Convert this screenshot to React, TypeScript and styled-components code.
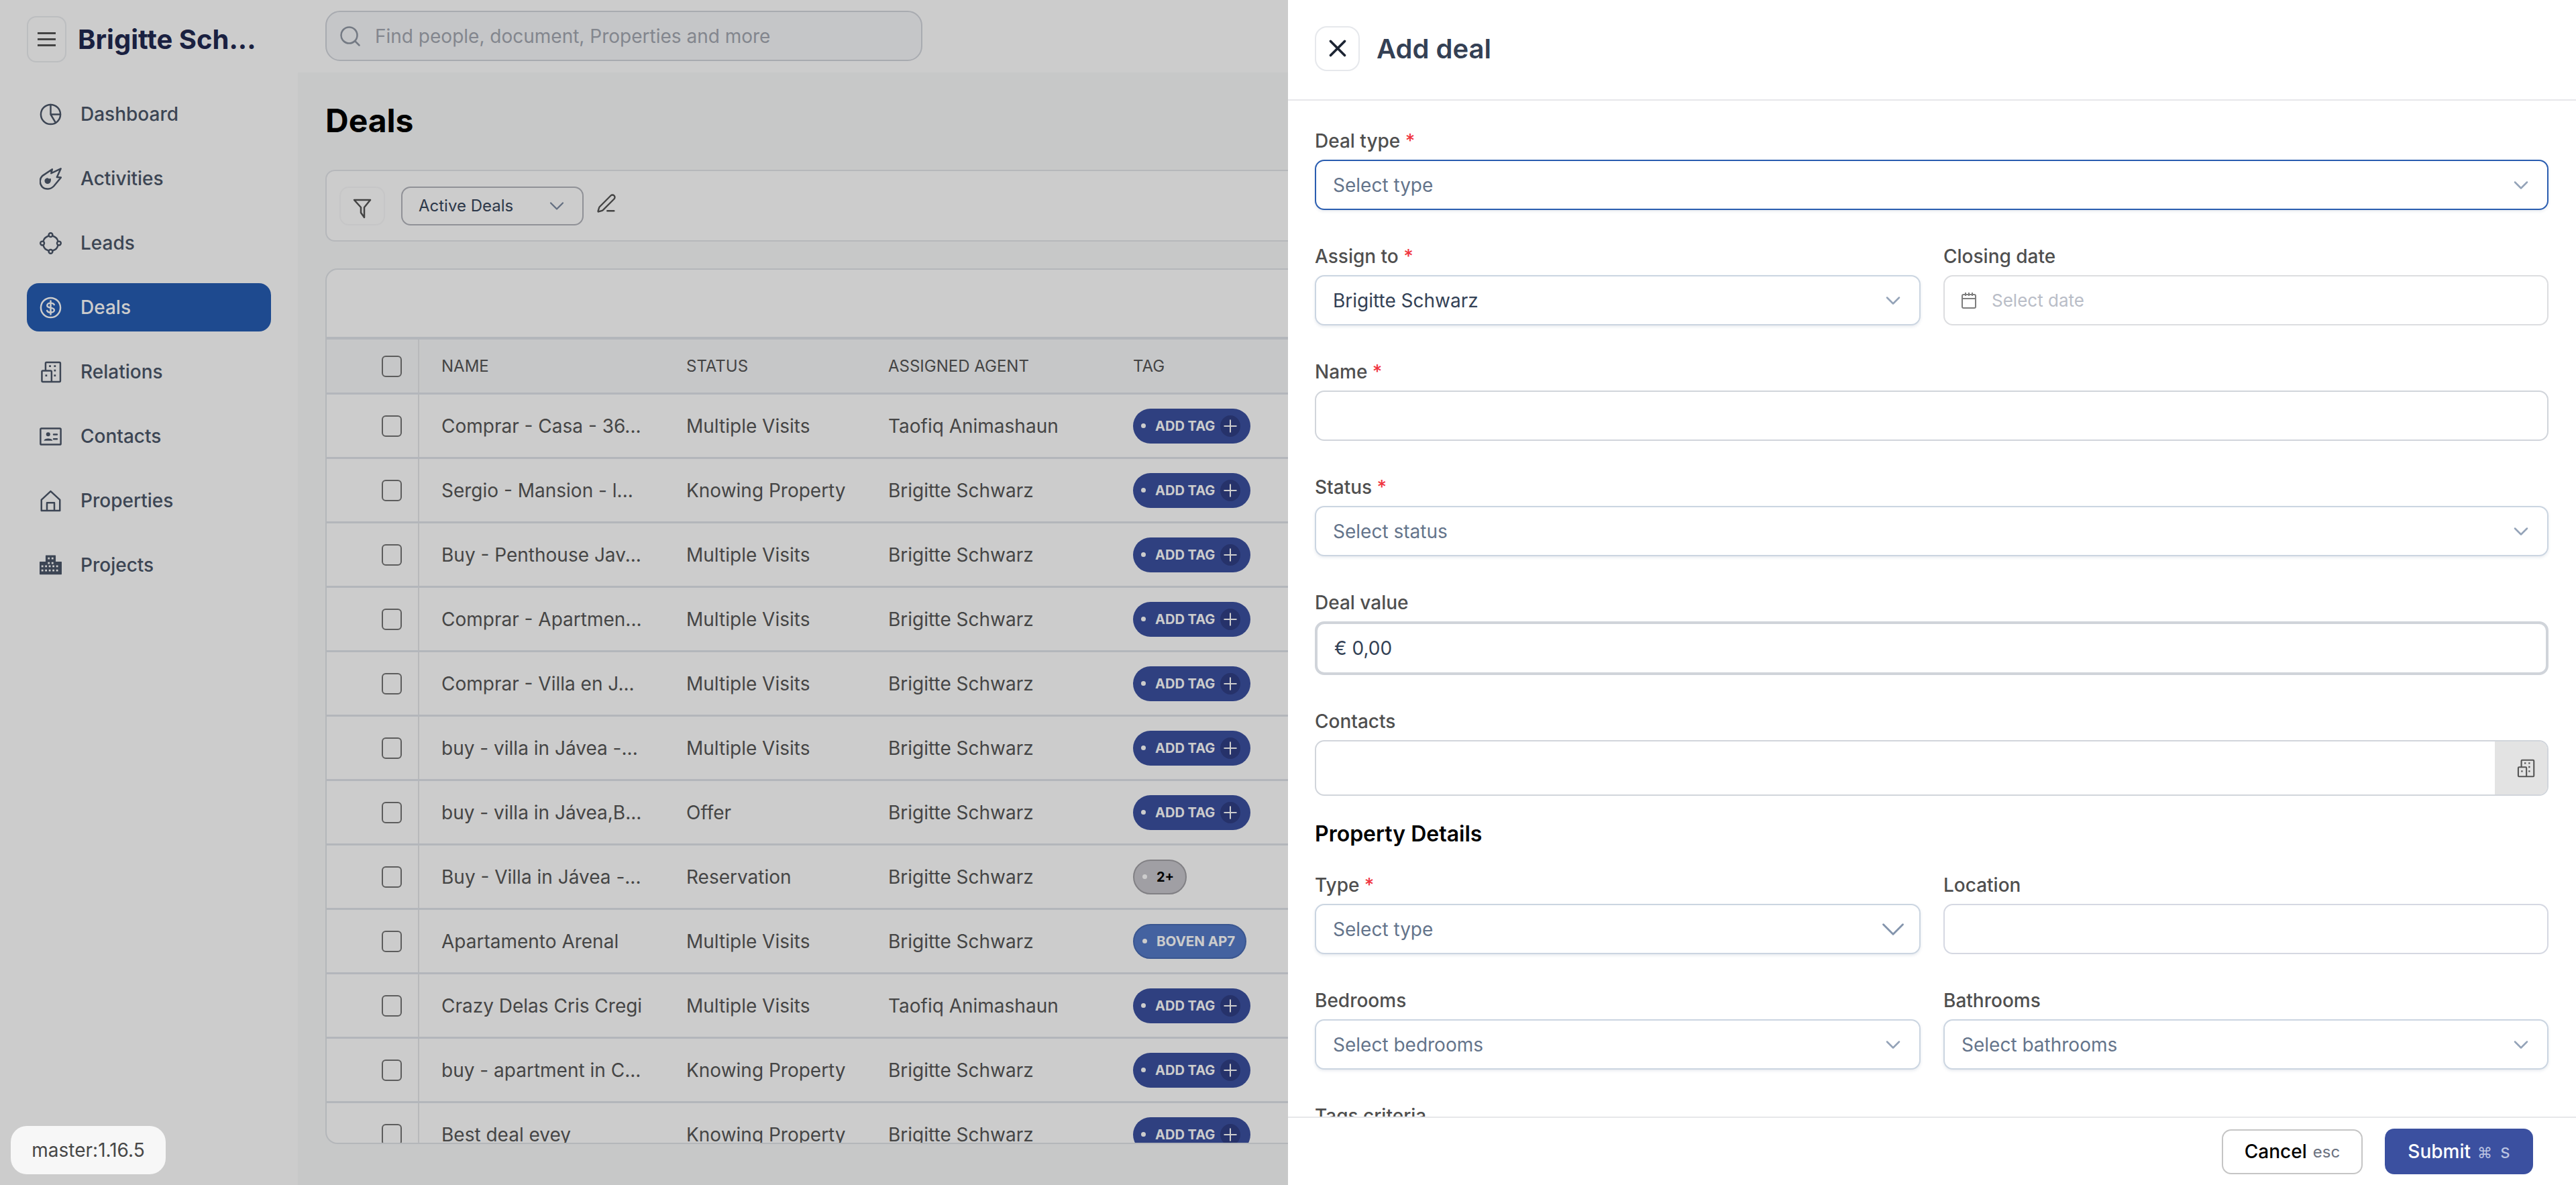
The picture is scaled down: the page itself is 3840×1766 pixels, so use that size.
import React from "react";
import styled, { createGlobalStyle } from "styled-components";
import { ChevronDown, PenLine, Plus, Search, X } from "lucide-react";

const GlobalStyle = createGlobalStyle`
  * { box-sizing: border-box; }
  html, body { margin: 0; padding: 0; height: 100%; overflow: hidden; background: #fff; }
  body { font-family: Inter, "Noto Sans", sans-serif; }
`;

interface IconProps {
  size?: number;
}

const strokeProps = {
  fill: "none",
  stroke: "currentColor",
  strokeWidth: 1.8,
  strokeLinecap: "round" as const,
  strokeLinejoin: "round" as const,
};

const PieIcon = ({ size = 33 }: IconProps) => (
  <svg width={size} height={size} viewBox="0 0 24 24" {...strokeProps}>
    <circle cx="12" cy="12" r="10.6" />
    <path d="M12 1.5V12H22.5M12 12l5.4 9" />
  </svg>
);

const MeteorIcon = ({ size = 33 }: IconProps) => (
  <svg width={size} height={size} viewBox="0 0 24 24">
    <path {...strokeProps} d="M13.7 1.6 12.6 6 23 1l-4.2 9.2 4.4.4-7.7 9.2c-3.2 3.6-9 4.4-12.6 1C-.4 17-.2 12 3 8.8Z" />
    <path fill="currentColor" d="M9 11c.6 1 1.6 1.1 3.2.6.6 2.7-.7 5.8-3.4 5.8-2 0-3.4-1.5-3.4-3.3 0-1.700 1.400-3.100 3.600-3.100Z" />
  </svg>
);

const LeadsIcon = ({ size = 33 }: IconProps) => (
  <svg width={size} height={size} viewBox="0 0 24 24" {...strokeProps}>
    <circle cx="12" cy="3" r="2.100" />
    <circle cx="21" cy="12" r="2.100" />
    <circle cx="12" cy="21" r="2.100" />
    <circle cx="3" cy="12" r="2.100" />
    <path d="M14 4q5 1.500 6 6M20 14q-1 5-6 6M10 20q-5-1-6-6M4 10q1-4.500 6-6" />
  </svg>
);

const DollarIcon = ({ size = 33 }: IconProps) => (
  <svg width={size} height={size} viewBox="0 0 24 24" {...strokeProps}>
    <circle cx="12" cy="12" r="10.600" />
    <path d="M15.800 8.800C15.200 7.500 13.800 7 12 7c-2 0-3.800 1-3.800 2.700 0 1.800 1.700 2.200 3.800 2.500 2.100.300 3.900.800 3.900 2.500 0 1.500-1.800 2.500-3.900 2.500-1.800 0-3.300-.600-3.900-2M12 4.800v14.400" />
  </svg>
);

const BuildingsIcon = ({ size = 33 }: IconProps) => (
  <svg width={size} height={size} viewBox="0 0 24 24">
    <path {...strokeProps} d="M6.500 10.500V2.500q0-1 1-1h14q1 0 1 1v19q0 1-1 1h-18q-1 0-1-1v-10q0-1 1-1h8.500q1 0 1 1v11" />
    <path fill="currentColor" d="M10.300 4.500h2v2h-2zM15.600 4.500h2v2h-2zM15.600 9.300h2v2h-2zM15.600 14.800h2v2h-2zM6.200 14.800h2v2h-2z" />
  </svg>
);

const IdCardIcon = ({ size = 33 }: IconProps) => (
  <svg width={size} height={size} viewBox="0 0 24 24">
    <rect {...strokeProps} x="1" y="3.200" width="22" height="17.600" rx="1" />
    <circle fill="currentColor" cx="9.300" cy="9.700" r="2.200" />
    <path fill="currentColor" d="M4.700 16.500c.6-3 8.600-3 9.400 0Z" />
    <path {...strokeProps} d="M15.300 9.800h3.600M15.300 14.800h3.600" />
  </svg>
);

const HouseIcon = ({ size = 33 }: IconProps) => (
  <svg width={size} height={size} viewBox="0 0 24 24" {...strokeProps}>
    <path d="M2 10.800 12 1.500l10 9.300v11.700H2ZM8 22.500V14h8v8.500" />
  </svg>
);

// windows are cut out of the block with evenodd
const cityWindows = [
  [9, 3.500], [13, 3.500], [9, 8.500], [13, 8.500],
  [2, 12], [6, 12], [10, 12], [14, 12], [18, 12],
  [2, 16.500], [6, 16.500], [10, 16.500], [14, 16.500], [18, 16.500],
]
  .map(([x, y]) => `M${x} ${y}h2v2h-2z`)
  .join("");

const CityIcon = ({ size = 33 }: IconProps) => (
  <svg width={size} height={size} viewBox="0 0 24 24">
    <path
      fill="currentColor"
      fillRule="evenodd"
      d={`M6.500 1.500q0-.5.500-.5h10q.5 0 .5.500V8H23.500q.5 0 .5.500V21.500q0 .5-.5.500H.5Q0 22 0 21.500V8.500Q0 8 .5 8H6.500Z${cityWindows}`}
    />
  </svg>
);

const FunnelIcon = () => (
  <svg width="28" height="30" viewBox="0 0 28 30" fill="none" stroke="currentColor" strokeWidth="2.500" strokeLinejoin="round">
    <path d="M2 2h24l-9 11v15l-5-7v-8Z" />
  </svg>
);

const CalendarIcon = () => (
  <svg width="24" height="26" viewBox="0 0 24 26" fill="none" stroke="currentColor" strokeWidth="2">
    <rect x="2" y="4" width="20" height="20" rx="2" />
    <path d="M2 10h20M7 1v5M17 1v5M12 1v5" />
  </svg>
);

const navItems = [
  { label: "Dashboard", icon: <PieIcon /> },
  { label: "Activities", icon: <MeteorIcon /> },
  { label: "Leads", icon: <LeadsIcon /> },
  { label: "Deals", icon: <DollarIcon />, active: true },
  { label: "Relations", icon: <BuildingsIcon /> },
  { label: "Contacts", icon: <IdCardIcon /> },
  { label: "Properties", icon: <HouseIcon /> },
  { label: "Projects", icon: <CityIcon /> },
];

type Tag = "add" | "more" | "boven";

const MV = "Multiple Visits";
const KP = "Knowing Property";
const BS = "Brigitte Schwarz";
const TA = "Taofiq Animashaun";

const deals: { name: string; status: string; agent: string; tag: Tag }[] = [
  { name: "Comprar - Casa - 36...", status: MV, agent: TA, tag: "add" },
  { name: "Sergio - Mansion - l...", status: KP, agent: BS, tag: "add" },
  { name: "Buy - Penthouse Jav...", status: MV, agent: BS, tag: "add" },
  { name: "Comprar - Apartmen...", status: MV, agent: BS, tag: "add" },
  { name: "Comprar - Villa en J...", status: MV, agent: BS, tag: "add" },
  { name: "buy - villa in Jávea -...", status: MV, agent: BS, tag: "add" },
  { name: "buy - villa in Jávea,B...", status: "Offer", agent: BS, tag: "add" },
  { name: "Buy - Villa in Jávea -...", status: "Reservation", agent: BS, tag: "more" },
  { name: "Apartamento Arenal", status: MV, agent: BS, tag: "boven" },
  { name: "Crazy Delas Cris Cregi", status: MV, agent: TA, tag: "add" },
  { name: "buy - apartment in C...", status: KP, agent: BS, tag: "add" },
  { name: "Best deal evey", status: KP, agent: BS, tag: "add" },
];

const TagCell: React.FC<{ tag: Tag }> = ({ tag }) => {
  if (tag === "more") {
    return (
      <MorePill>
        <PillDot />
        2+
      </MorePill>
    );
  }
  if (tag === "boven") {
    return (
      <BovenPill>
        <PillDot />
        BOVEN AP7
      </BovenPill>
    );
  }
  return (
    <AddPill>
      <PillDot />
      ADD TAG
      <PlusBubble>
        <Plus size={30} strokeWidth={1.600} />
      </PlusBubble>
    </AddPill>
  );
};

const SelectField: React.FC<{
  value: string;
  placeholder?: boolean;
  focused?: boolean;
  bigChevron?: boolean;
}> = ({ value, placeholder, focused, bigChevron }) => (
  <Select $focused={focused}>
    <SelectValue $placeholder={placeholder}>{value}</SelectValue>
    <ChevronSlot $big={bigChevron}>
      <ChevronDown size={bigChevron ? 58 : 36} strokeWidth={bigChevron ? 1.200 : 1.700} />
    </ChevronSlot>
  </Select>
);

const App: React.FC = () => {
  return (
    <>
      <GlobalStyle />
      <Page>
        <Sidebar>
          <BrandRow>
            <MenuButton>
              <MenuBar />
              <MenuBar />
              <MenuBar />
            </MenuButton>
            <Brand>Brigitte Sch...</Brand>
          </BrandRow>
          <Nav>
            {navItems.map((item) => (
              <NavItem key={item.label} $active={item.active}>
                {item.icon}
                {item.label}
              </NavItem>
            ))}
          </Nav>
        </Sidebar>

        <Content>
          <TopBar>
            <SearchBox>
              <Search size={36} strokeWidth={1.700} />
              Find people, document, Properties and more
            </SearchBox>
          </TopBar>
          <Main>
            <PageTitle>Deals</PageTitle>
            <FilterCard>
              <FilterButton>
                <FunnelIcon />
              </FilterButton>
              <ViewSelect>
                Active Deals
                <ChevronDown size={36} strokeWidth={1.500} />
              </ViewSelect>
              <EditIcon>
                <PenLine size={30} strokeWidth={1.900} />
              </EditIcon>
            </FilterCard>
            <TableCard>
              <TableToolbar />
              <HeadRow>
                <CheckCell>
                  <Checkbox />
                </CheckCell>
                <HeadCell>NAME</HeadCell>
                <HeadCell>STATUS</HeadCell>
                <HeadCell>ASSIGNED AGENT</HeadCell>
                <HeadCell>TAG</HeadCell>
              </HeadRow>
              {deals.map((deal) => (
                <Row key={deal.name}>
                  <CheckCell>
                    <Checkbox />
                  </CheckCell>
                  <Cell>{deal.name}</Cell>
                  <Cell>{deal.status}</Cell>
                  <Cell>{deal.agent}</Cell>
                  <Cell>
                    <TagCell tag={deal.tag} />
                  </Cell>
                </Row>
              ))}
            </TableCard>
          </Main>
        </Content>

        <Backdrop />
        <VersionChip>master:1.16.5</VersionChip>

        <Panel>
          <PanelHeader>
            <CloseButton>
              <X size={42} strokeWidth={2.100} />
            </CloseButton>
            <PanelTitle>Add deal</PanelTitle>
          </PanelHeader>
          <PanelBody>
            <Field>
              <Label>
                Deal type <Required>*</Required>
              </Label>
              <SelectField value="Select type" placeholder focused />
            </Field>
            <TwoColumns>
              <Field>
                <Label>
                  Assign to <Required>*</Required>
                </Label>
                <SelectField value="Brigitte Schwarz" />
              </Field>
              <Field>
                <Label>Closing date</Label>
                <DateInput>
                  <CalendarIcon />
                  Select date
                </DateInput>
              </Field>
            </TwoColumns>
            <Field>
              <Label>
                Name <Required>*</Required>
              </Label>
              <TextInput />
            </Field>
            <Field>
              <Label>
                Status <Required>*</Required>
              </Label>
              <SelectField value="Select status" placeholder />
            </Field>
            <Field>
              <Label>Deal value</Label>
              <MoneyInput>€ 0,00</MoneyInput>
            </Field>
            <Field>
              <Label>Contacts</Label>
              <ContactsInput>
                <ContactsAddon>
                  <BuildingsIcon size={28} />
                </ContactsAddon>
              </ContactsInput>
            </Field>
            <SectionTitle>Property Details</SectionTitle>
            <TwoColumns>
              <Field>
                <Label>
                  Type <Required>*</Required>
                </Label>
                <SelectField value="Select type" placeholder bigChevron />
              </Field>
              <Field>
                <Label>Location</Label>
                <TextInput $soft />
              </Field>
            </TwoColumns>
            <TwoColumns>
              <Field>
                <Label>Bedrooms</Label>
                <SelectField value="Select bedrooms" placeholder />
              </Field>
              <Field>
                <Label>Bathrooms</Label>
                <SelectField value="Select bathrooms" placeholder />
              </Field>
            </TwoColumns>
            <Field>
              <Label>Tags criteria</Label>
              <TextInput />
            </Field>
          </PanelBody>
          <PanelFooter>
            <CancelButton>
              Cancel <Hint>esc</Hint>
            </CancelButton>
            <SubmitButton>
              Submit
              <SubmitHint>
                <CommandGlyph>⌘</CommandGlyph> s
              </SubmitHint>
            </SubmitButton>
          </PanelFooter>
        </Panel>
      </Page>
    </>
  );
};

export default App;

const Page = styled.div`
  position: relative;
  display: flex;
  width: 3840px;
  height: 1766px;
  overflow: hidden;
  background: #fff;
`;

const Sidebar = styled.aside`
  flex: 0 0 444px;
  display: flex;
  flex-direction: column;
  padding: 24px 40px 0;
`;

const BrandRow = styled.div`
  display: flex;
  align-items: center;
  gap: 17px;
  height: 69px;
  margin-bottom: 41px;
`;

const MenuButton = styled.button`
  display: flex;
  flex-direction: column;
  align-items: center;
  justify-content: center;
  gap: 6px;
  width: 59px;
  height: 69px;
  padding: 0;
  background: #fff;
  border: 2px solid #eceef1;
  border-radius: 14px;
`;

const MenuBar = styled.span`
  width: 27px;
  height: 3px;
  background: #555;
`;

const Brand = styled.div`
  font-size: 40px;
  font-weight: 700;
  color: #212850;
  white-space: nowrap;
`;

const Nav = styled.nav`
  display: flex;
  flex-direction: column;
  gap: 24px;
`;

const NavItem = styled.a<{ $active?: boolean }>`
  display: flex;
  align-items: center;
  gap: 28px;
  height: 72px;
  padding-left: 19px;
  border-radius: 18px;
  font-size: 28px;
  font-weight: 500;
  color: ${({ $active }) => ($active ? "#fff" : "#4c5769")};
  background: ${({ $active }) => ($active ? "#265db3" : "transparent")};
`;

const Content = styled.div`
  flex: 1;
  min-width: 0;
  display: flex;
  flex-direction: column;
`;

const TopBar = styled.header`
  flex: 0 0 108px;
  padding: 16px 41px 0;
`;

const SearchBox = styled.div`
  display: flex;
  align-items: center;
  gap: 19px;
  width: 890px;
  height: 75px;
  padding-left: 17px;
  background: #f7f8fa;
  border: 2.5px solid #d3d6dd;
  border-radius: 22px;
  font-size: 28px;
  color: #a4a8b2;
  svg {
    color: #9299a5;
  }
`;

const Main = styled.main`
  flex: 1;
  min-height: 0;
  display: flex;
  flex-direction: column;
  padding: 43px 41px 61px;
  background: #f9fafb;
`;

const PageTitle = styled.h1`
  margin: 0 0 44px;
  font-size: 48px;
  line-height: 58px;
  font-weight: 700;
  color: #000;
`;

const FilterCard = styled.section`
  flex: 0 0 107px;
  display: flex;
  align-items: center;
  gap: 24px;
  padding-left: 19px;
  background: #fff;
  border: 2px solid #e4e6ea;
  border-radius: 14px;
`;

const FilterButton = styled.button`
  display: flex;
  align-items: center;
  justify-content: center;
  width: 68px;
  height: 58px;
  padding: 8px 0 0;
  background: #fff;
  border: 2px solid #f8f8f9;
  border-radius: 14px;
  color: #555;
`;

const ViewSelect = styled.div`
  display: flex;
  align-items: center;
  justify-content: space-between;
  width: 272px;
  height: 58px;
  padding: 0 24px 0 24px;
  background: #fff;
  border: 2.5px solid #b4b6bd;
  border-radius: 14px;
  font-size: 24px;
  color: #38465c;
  svg {
    color: #7c8aa0;
    margin-right: -4px;
  }
`;

const EditIcon = styled.span`
  display: flex;
  margin: -8px 0 0 -5px;
  color: #555;
`;

const TableCard = styled.section`
  flex: 1;
  min-height: 0;
  margin-top: 40px;
  overflow: hidden;
  background: #fff;
  border: 2px solid #e2e5e9;
  border-radius: 18px 0 0 18px;
`;

const TableToolbar = styled.div`
  height: 100px;
`;

const columns = `138px 365px 301px 365px 1fr`;

const HeadRow = styled.div`
  display: grid;
  grid-template-columns: ${columns};
  height: 86px;
  background: #f8f9fb;
  border-top: 4px solid #e0e4ea;
  border-bottom: 3px solid #e0e4ea;
`;

const Row = styled.div`
  display: grid;
  grid-template-columns: ${columns};
  height: 96px;
  border-bottom: 3px solid #e0e4ea;
`;

const CheckCell = styled.div`
  display: flex;
  align-items: center;
  justify-content: flex-end;
  padding-right: 24px;
  border-right: 2px solid #e7e8ea;
`;

const Checkbox = styled.span`
  width: 30px;
  height: 32px;
  background: transparent;
  border: 2.5px solid #757575;
  border-radius: 6px;
`;

const HeadCell = styled.div`
  display: flex;
  align-items: center;
  padding-left: 33px;
  font-size: 24px;
  color: #555;
`;

const Cell = styled.div`
  display: flex;
  align-items: center;
  padding-left: 33px;
  font-size: 28px;
  color: #575757;
  white-space: nowrap;
`;

const Pill = styled.span`
  display: inline-flex;
  align-items: center;
  height: 52px;
  padding-left: 12px;
  border-radius: 26px;
  white-space: nowrap;
`;

const PillDot = styled.i`
  flex: none;
  width: 7px;
  height: 7px;
  margin-right: 14px;
  border-radius: 50%;
  background: #fff;
`;

const AddPill = styled(Pill)`
  width: 175px;
  background: #3b50a0;
  font-size: 20px;
  font-weight: 700;
  color: #fff;
`;

const PlusBubble = styled.b`
  display: flex;
  align-items: center;
  justify-content: center;
  width: 30px;
  height: 32px;
  margin-left: 8px;
  border-radius: 50%;
  background: #303f85;
`;

const MorePill = styled(Pill)`
  width: 80px;
  background: #c8c7cd;
  border: 2px solid #a2a1a6;
  font-size: 20px;
  font-weight: 700;
  color: #000;
`;

const BovenPill = styled(Pill)`
  width: 169px;
  background: #567bc8;
  border: 2px solid #496cb4;
  font-size: 20.500px;
  font-weight: 700;
  color: #fff;
`;

const Backdrop = styled.div`
  position: absolute;
  inset: 0;
  background: rgba(0, 0, 0, 0.2);
`;

const VersionChip = styled.div`
  position: absolute;
  left: 16px;
  top: 1678px;
  display: flex;
  align-items: center;
  justify-content: center;
  width: 231px;
  height: 72px;
  background: #f7f7f7;
  border-radius: 24px;
  font-size: 28px;
  color: #474747;
`;

const Panel = styled.aside`
  position: absolute;
  top: 0;
  right: 0;
  bottom: 0;
  display: flex;
  flex-direction: column;
  width: 1920px;
  background: #fff;
`;

const PanelHeader = styled.header`
  flex: 0 0 150px;
  display: flex;
  align-items: center;
  gap: 25px;
  padding: 0 40px 4px;
  border-bottom: 2px solid #e6e7ea;
`;

const CloseButton = styled.button`
  display: flex;
  align-items: center;
  justify-content: center;
  width: 67px;
  height: 67px;
  padding: 0;
  background: #fff;
  border: 2px solid #e6e8ec;
  border-radius: 18px;
  color: #1c2433;
`;

const PanelTitle = styled.h2`
  margin: 0;
  font-size: 40px;
  font-weight: 600;
  color: #344054;
`;

const PanelBody = styled.div`
  flex: 1;
  min-height: 0;
  overflow: hidden;
  display: flex;
  flex-direction: column;
  gap: 52px;
  padding: 43px 41px 0 40px;
`;

const TwoColumns = styled.div`
  display: grid;
  grid-template-columns: 903px 902px;
  gap: 34px;
`;

const Field = styled.div`
  flex: none;
  min-width: 0;
`;

const Label = styled.label`
  display: block;
  height: 34px;
  margin-bottom: 11px;
  font-size: 28px;
  line-height: 34px;
  font-weight: 500;
  color: #4f4f4f;
`;

const Required = styled.span`
  color: #f0353f;
`;

const Select = styled.div<{ $focused?: boolean }>`
  display: flex;
  align-items: center;
  justify-content: space-between;
  height: 75px;
  padding: 0 21px 0 25px;
  background: #fff;
  border: 2px solid ${({ $focused }) => ($focused ? "#2a5db0" : "#cbd5e1")};
  border-radius: 14px;
  box-shadow: 0 2px 4px rgba(60, 80, 120, 0.12);
`;

const SelectValue = styled.span<{ $placeholder?: boolean }>`
  font-size: 28px;
  color: ${({ $placeholder }) => ($placeholder ? "#64748b" : "#334155")};
`;

const ChevronSlot = styled.span<{ $big?: boolean }>`
  display: flex;
  align-items: center;
  justify-content: center;
  width: 36px;
  height: 36px;
  color: ${({ $big }) => ($big ? "#8495ad" : "#94a3b8")};
  svg {
    flex: none;
  }
`;

const DateInput = styled.div`
  display: flex;
  align-items: center;
  gap: 22px;
  height: 75px;
  padding-left: 24px;
  background: #fff;
  border: 2px solid #dcdde0;
  border-radius: 14px;
  font-size: 26px;
  color: #b9bdc7;
  svg {
    color: #7d7d7d;
  }
`;

const TextInput = styled.div<{ $soft?: boolean }>`
  height: 75px;
  background: #fff;
  border: 2px solid ${({ $soft }) => ($soft ? "#d5d8e2" : "#d1d5db")};
  border-radius: 14px;
`;

const MoneyInput = styled.div`
  display: flex;
  align-items: center;
  height: 80px;
  padding-left: 25px;
  background: #fff;
  border: 4px solid #d0d4da;
  border-radius: 14px;
  font-size: 28px;
  color: #334155;
`;

const ContactsInput = styled.div`
  display: flex;
  justify-content: flex-end;
  height: 83px;
  overflow: hidden;
  background: #fff;
  border: 2px solid #d1d5db;
  border-radius: 14px;
`;

const ContactsAddon = styled.span`
  display: flex;
  align-items: center;
  justify-content: center;
  width: 78px;
  padding-left: 14px;
  background: #e3e3e3;
  color: #555;
`;

const SectionTitle = styled.h3`
  flex: none;
  height: 40px;
  margin: -15px 0 -13px;
  font-size: 32px;
  line-height: 40px;
  font-weight: 600;
  color: #000;
`;

const PanelFooter = styled.footer`
  flex: 0 0 102px;
  display: flex;
  align-items: center;
  justify-content: flex-end;
  gap: 33px;
  padding: 0 64px 0 0;
  background: #fff;
  border-top: 2px solid #e6e7ea;
`;

const CancelButton = styled.button`
  display: flex;
  align-items: center;
  justify-content: center;
  gap: 9px;
  width: 210px;
  height: 67px;
  padding: 0;
  background: #fff;
  border: 2.5px solid #c5c5c5;
  border-radius: 14px;
  font-family: inherit;
  font-size: 28px;
  font-weight: 500;
  color: #000;
`;

const Hint = styled.span`
  font-size: 24px;
  font-weight: 400;
  color: #6b7280;
`;

const SubmitButton = styled.button`
  display: flex;
  align-items: center;
  justify-content: center;
  gap: 10px;
  width: 221px;
  height: 68px;
  padding: 0;
  background: #3b50a0;
  border: 0;
  border-radius: 14px;
  font-family: inherit;
  font-size: 28px;
  font-weight: 500;
  color: #fff;
`;

const SubmitHint = styled.span`
  font-weight: 400;
  color: #bcc4e2;
`;

const CommandGlyph = styled.span`
  font-family: "DejaVu Sans", sans-serif;
  font-size: 22px;
  margin-right: 4px;
`;
